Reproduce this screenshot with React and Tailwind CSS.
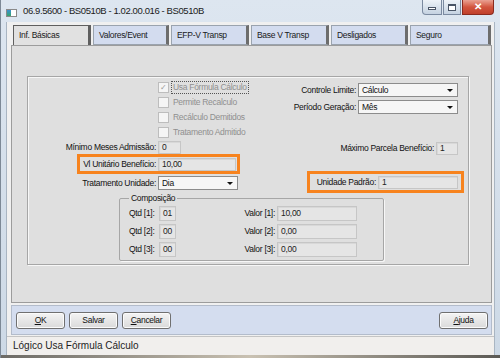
import React from "react";

const Input = ({ w, value, h = "h-[13px]" }) => (
  <div
    className={`${w} ${h} bg-[#e5e5e5] border border-[#c6c6c6] shadow-[inset_1px_1px_0_#d8d8d8] flex items-center pl-[3px] text-[8.5px] leading-none text-[#222]`}
  >
    {value}
  </div>
);

const Select = ({ w, value }) => (
  <div
    className={`${w} h-[14px] bg-[#f6f6f6] border border-[#8c8c8c] flex items-center justify-between pl-[3px] pr-[4px] text-[8.5px] leading-none text-[#111]`}
  >
    <span>{value}</span>
    <span className="w-0 h-0 border-l-[3px] border-r-[3px] border-t-[3px] border-l-transparent border-r-transparent border-t-[#111]" />
  </div>
);

const Check = ({ label, checked, focus }) => (
  <div className="h-[15px] flex items-center gap-[2px] whitespace-nowrap">
    <div className="shrink-0 w-[11px] h-[11px] border border-[#bdbdbd] bg-[#f5f5f5] flex items-center justify-center text-[8px] leading-none text-[#9a9a9a]">
      {checked ? "✓" : ""}
    </div>
    <span
      className={`shrink-0 whitespace-nowrap text-[8.5px] leading-none text-[#8f8f8f] px-[1px] py-[1px] ${
        focus ? "border border-dotted border-[#555]" : "border border-transparent"
      }`}
    >
      {label}
    </span>
  </div>
);

const Button = ({ children, w = "w-[49px]" }) => (
  <div
    className={`${w} h-[17px] rounded-[3px] border border-[#707070] bg-gradient-to-b from-[#f4f4f4] to-[#dadada] shadow-[inset_0_0_0_1px_#fbfbfb] flex items-center justify-center text-[8.5px] leading-none text-[#111]`}
  >
    {children}
  </div>
);

const Label = ({ w, children }) => (
  <span className={`${w} text-right text-[8.5px] leading-none text-[#111] whitespace-nowrap`}>
    {children}
  </span>
);

const tabs = [
  { label: "Inf. Básicas", w: "w-[78px]", active: true },
  { label: "Valores/Event", w: "w-[76px]" },
  { label: "EFP-V Transp", w: "w-[78px]" },
  { label: "Base V Transp", w: "w-[78px]" },
  { label: "Desligados", w: "w-[77px]" },
  { label: "Seguro", w: "w-[81px]" },
];

const comp = [
  ["Qtd [1]:", "01", "Valor [1]:", "10,00"],
  ["Qtd [2]:", "00", "Valor [2]:", "0,00"],
  ["Qtd [3]:", "00", "Valor [3]:", "0,00"],
];

export default function App() {
  return (
    <div className="w-[500px] h-[358px] overflow-hidden flex flex-col bg-gradient-to-b from-[#dde6f0] to-[#cdd9e6] border-l border-[#7d8996] font-['Liberation_Sans',Arial,sans-serif] tracking-[-0.3px]">
      {/* Title bar */}
      <div className="h-[22px] flex items-start shrink-0">
        <div className="ml-[5px] mt-[9px] w-[11px] h-[8px] border border-[#8a8a8a] bg-white flex">
          <div className="w-[4px] h-full bg-gradient-to-b from-[#3d8fd0] to-[#3aa46a]" />
        </div>
        <div className="ml-[6px] mt-[6px] text-[9.5px] leading-none text-[#1b1b1b] tracking-[-0.4px]">
          06.9.5600 - BS0510B - 1.02.00.016 - BS0510B
        </div>
        <div className="ml-auto mr-[6px] flex items-start gap-[1px]">
          <div className="w-[20px] h-[15px] rounded-bl-[4px] border border-t-0 border-[#7b8aa0] bg-gradient-to-b from-[#eef3f8] to-[#c5d2e1] flex items-center justify-center">
            <div className="w-[8px] h-[3px] border border-[#4a5566] bg-white mt-[3px]" />
          </div>
          <div className="w-[18px] h-[15px] border border-t-0 border-[#7b8aa0] bg-gradient-to-b from-[#eef3f8] to-[#c5d2e1] flex items-center justify-center">
            <div className="w-[8px] h-[7px] border border-[#4a5566] border-t-2 bg-white" />
          </div>
          <div className="w-[32px] h-[15px] rounded-br-[4px] border border-t-0 border-[#8a2a1e] bg-gradient-to-b from-[#e9a192] via-[#d2553e] to-[#c0402b] flex items-center justify-center text-white text-[10px] font-bold leading-none">
            ✕
          </div>
        </div>
      </div>

      {/* Client area */}
      <div className="mx-[5px] h-[333px] bg-[#f0f0f0] border-x border-[#a9b5c2] flex flex-col">
        {/* Tabs */}
        <div className="pt-[3px] pl-[6px] flex gap-[2px] h-[23px]">
          {tabs.map((t) => (
            <div
              key={t.label}
              className={`${t.w} h-[20px] flex items-center pl-[5px] text-[8.5px] leading-none text-[#1a1a1a] ${
                t.active
                  ? "bg-[#e1e1e1] border border-[#5f5f5f] border-r-[3px] border-b-0"
                  : "bg-[#d3dcef] border border-[#9aa3ae] border-r-[3px] border-r-[#6d6d6d]"
              }`}
            >
              {t.label}
            </div>
          ))}
        </div>

        {/* Panel */}
        <div className="ml-[4px] w-[481px] h-[258px] bg-[#dfdfdf] border border-[#9c9c9c] pt-[30px] pl-[15px]">
          <div className="w-[442px] h-[189px] border border-[#a6a6a6] shadow-[inset_1px_1px_0_#f7f7f7,1px_1px_0_#f7f7f7] flex flex-col">
            <div className="flex">
              {/* Left column */}
              <div className="w-[219px] flex flex-col">
                <div className="pt-[3px] pl-[130px] flex flex-col">
                  <Check label="Usa Fórmula Cálculo" checked focus />
                  <Check label="Permite Recalculo" />
                  <Check label="Recálculo Demitidos" />
                  <Check label="Tratamento Admitido" />
                </div>
                <div className="mt-[1px] h-[13px] flex items-center">
                  <Label w="w-[128px]">Mínimo Meses Admissão:</Label>
                  <div className="ml-[2px]">
                    <Input w="w-[23px]" value="0" />
                  </div>
                </div>
                <div className="ml-[49px] w-[163px] h-[20px] border-[3px] border-[#f7831e] flex items-center">
                  <Label w="w-[76px]">Vl Unitário Benefício:</Label>
                  <div className="ml-[2px]">
                    <Input w="w-[78px]" value="10,00" />
                  </div>
                </div>
                <div className="mt-[2px] h-[14px] flex items-center">
                  <Label w="w-[128px]">Tratamento Unidade:</Label>
                  <div className="ml-[2px]">
                    <Select w="w-[80px]" value="Dia" />
                  </div>
                </div>
              </div>

              {/* Right column */}
              <div className="flex-1 flex flex-col">
                <div className="mt-[6px] h-[14px] flex items-center">
                  <Label w="w-[109px]">Controle Limite:</Label>
                  <div className="ml-[2px]">
                    <Select w="w-[100px]" value="Cálculo" />
                  </div>
                </div>
                <div className="mt-[3px] h-[14px] flex items-center">
                  <Label w="w-[109px]">Período Geração:</Label>
                  <div className="ml-[2px]">
                    <Select w="w-[100px]" value="Mês" />
                  </div>
                </div>
                <div className="mt-[28px] h-[13px] flex items-center">
                  <Label w="w-[187px]">Máximo Parcela Benefício:</Label>
                  <div className="ml-[2px]">
                    <Input w="w-[22px]" value="1" />
                  </div>
                </div>
                <div className="mt-[16px] ml-[60px] w-[157px] h-[22px] border-[3px] border-[#f7831e] flex items-center">
                  <Label w="w-[66px]">Unidade Padrão:</Label>
                  <div className="ml-[2px]">
                    <Input w="w-[80px]" value="1" />
                  </div>
                </div>
              </div>
            </div>

            {/* Composição */}
            <fieldset className="ml-[91px] w-[265px] border border-[#a6a6a6] rounded-[2px] shadow-[1px_1px_0_#f7f7f7] pb-[3px]">
              <legend className="ml-[9px] px-[2px] text-[8.5px] leading-[10px] text-[#111]">
                Composição
              </legend>
              <div className="mt-[3px] flex flex-col gap-[3px]">
                {comp.map(([ql, qv, vl, vv]) => (
                  <div key={ql} className="h-[15px] flex items-center">
                    <span className="w-[39px] pl-[9px] text-[8.5px] leading-none text-[#111] whitespace-nowrap">
                      {ql}
                    </span>
                    <Input w="w-[17px]" h="h-[15px]" value={qv} />
                    <span className="w-[101px] text-right pr-[2px] text-[8.5px] leading-none text-[#111]">
                      {vl}
                    </span>
                    <Input w="w-[80px]" h="h-[15px]" value={vv} />
                  </div>
                ))}
              </div>
            </fieldset>
          </div>
        </div>

        {/* Button bar */}
        <div className="mt-[2px] ml-[4px] w-[481px] h-[30px] bg-[#d4ddef] border border-[#b3bccb] flex items-center pl-[4px] pr-[3px] gap-[4px]">
          <Button>
            <span className="underline">O</span>K
          </Button>
          <Button>Salvar</Button>
          <Button>
            <span className="underline">C</span>ancelar
          </Button>
          <div className="ml-auto">
            <Button>
              <span className="underline">A</span>juda
            </Button>
          </div>
        </div>

        {/* Status bar */}
        <div className="mt-[1px] flex-1 bg-[#f1efed] border-t border-[#c4c4c4] flex items-center pl-[6px] text-[10px] leading-none text-[#1e1e1e] tracking-normal">
          Lógico Usa Fórmula Cálculo
        </div>
      </div>

      <div className="flex-1 bg-gradient-to-r from-[#6d6b66] via-[#c9c1b2] to-[#5c5a55]" />
    </div>
  );
}
